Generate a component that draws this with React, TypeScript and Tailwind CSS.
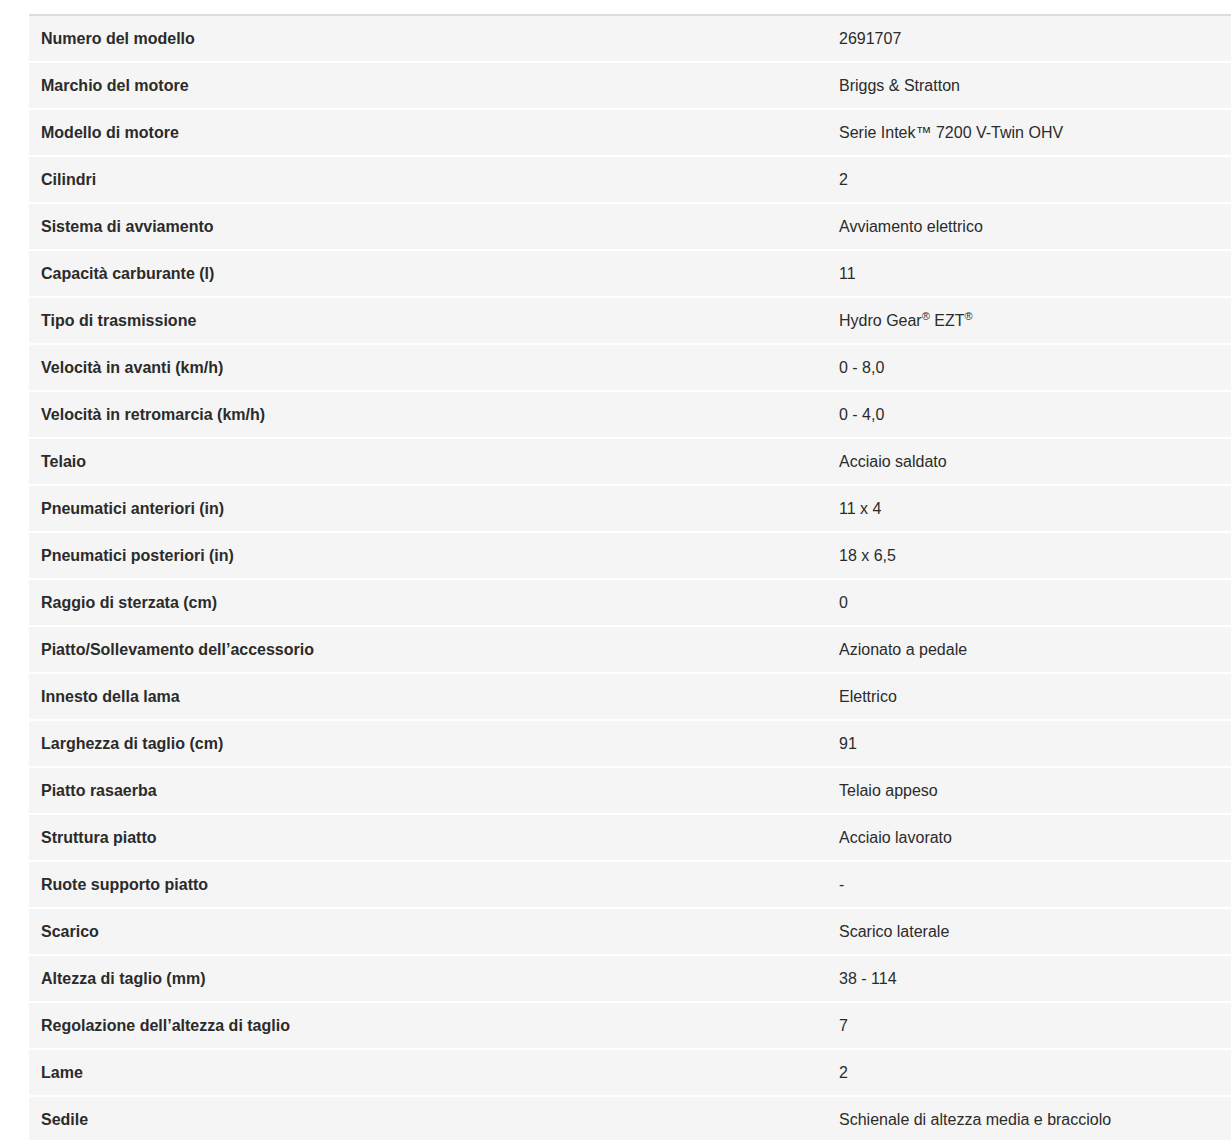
const specs: [string, React.ReactNode][] = [
  ["Numero del modello", "2691707"],
  ["Marchio del motore", "Briggs & Stratton"],
  ["Modello di motore", "Serie Intek™ 7200 V-Twin OHV"],
  ["Cilindri", "2"],
  ["Sistema di avviamento", "Avviamento elettrico"],
  ["Capacità carburante (l)", "11"],
  [
    "Tipo di trasmissione",
    <>
      Hydro Gear<sup className="text-[11px]">®</sup> EZT<sup className="text-[11px]">®</sup>
    </>,
  ],
  ["Velocità in avanti (km/h)", "0 - 8,0"],
  ["Velocità in retromarcia (km/h)", "0 - 4,0"],
  ["Telaio", "Acciaio saldato"],
  ["Pneumatici anteriori (in)", "11 x 4"],
  ["Pneumatici posteriori (in)", "18 x 6,5"],
  ["Raggio di sterzata (cm)", "0"],
  ["Piatto/Sollevamento dell’accessorio", "Azionato a pedale"],
  ["Innesto della lama", "Elettrico"],
  ["Larghezza di taglio (cm)", "91"],
  ["Piatto rasaerba", "Telaio appeso"],
  ["Struttura piatto", "Acciaio lavorato"],
  ["Ruote supporto piatto", "-"],
  ["Scarico", "Scarico laterale"],
  ["Altezza di taglio (mm)", "38 - 114"],
  ["Regolazione dell’altezza di taglio", "7"],
  ["Lame", "2"],
  ["Sedile", "Schienale di altezza media e bracciolo"],
];

export default function App() {
  return (
    <div className="min-h-screen bg-white pt-[14px] pl-[29px] font-['Liberation_Sans',Arial,sans-serif] text-[16px] text-[#2b2b2b]">
      <table className="w-[1202px] border-collapse border-t-2 border-[#dddddd]">
        <tbody>
          {specs.map(([label, value], i) => (
            <tr
              key={label}
              className={`bg-[#f5f5f5] ${i > 0 ? "border-t-2 border-white" : ""}`}
            >
              <td className="h-[47px] w-[798px] px-3 py-0 align-middle font-bold">
                {label}
              </td>
              <td className="h-[47px] px-3 py-0 align-middle">{value}</td>
            </tr>
          ))}
        </tbody>
      </table>
    </div>
  );
}
